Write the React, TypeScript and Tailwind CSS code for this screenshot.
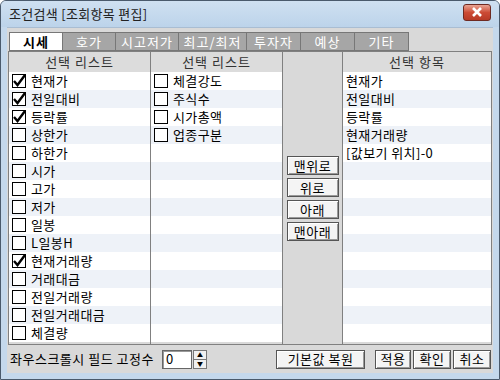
import React from 'react';

const FONT = { fontFamily: '"Noto Sans CJK KR", "Liberation Sans", sans-serif' };

const tabs = [
  { label: '시세', w: 'w-[54px]', active: true },
  { label: '호가', w: 'w-[54px]' },
  { label: '시고저가', w: 'w-[64px]' },
  { label: '최고/최저', w: 'w-[69px]' },
  { label: '투자자', w: 'w-[55px]' },
  { label: '예상', w: 'w-[55px]' },
  { label: '기타', w: 'w-[55px]' },
];

const list1: [string, boolean][] = [
  ['현재가', true],
  ['전일대비', true],
  ['등락률', true],
  ['상한가', false],
  ['하한가', false],
  ['시가', false],
  ['고가', false],
  ['저가', false],
  ['일봉', false],
  ['L일봉H', false],
  ['현재거래량', true],
  ['거래대금', false],
  ['전일거래량', false],
  ['전일거래대금', false],
  ['체결량', false],
];

const list2 = ['체결강도', '주식수', '시가총액', '업종구분'];
const picked = ['현재가', '전일대비', '등락률', '현재거래량', '[값보기 위치]-0'];

function CheckBox({ on }: { on: boolean }) {
  return (
    <span className="relative w-[14px] h-[14px] border border-black bg-white shrink-0">
      {on && (
        <svg className="absolute -left-[1px] -top-[2px]" width="16" height="15" viewBox="0 0 16 15">
          <path d="M2 8 L5.5 12 L13 2" fill="none" stroke="#000" strokeWidth="2.4" />
        </svg>
      )}
    </span>
  );
}

function Row({ i, children }: { i: number; children?: React.ReactNode }) {
  return (
    <div className={`h-[18px] flex items-center gap-[5px] pl-[3px] ${i % 2 ? 'bg-[#eef2f8]' : 'bg-white'}`}>
      {children}
    </div>
  );
}

function Header({ text }: { text: string }) {
  return (
    <div className="h-[20px] shrink-0 bg-[#dcdcdc] flex items-center justify-center text-[13px] text-[#333] tracking-[1px]">
      {text}
    </div>
  );
}

function Btn({ label, w }: { label: string; w: string }) {
  return (
    <div className={`${w} h-[19px] border border-[#555] bg-[#f4f4f4] shadow-[inset_1px_1px_0_#fff,inset_-1px_-1px_0_#999] flex items-center justify-center text-[13px] text-black tracking-[0.5px]`}>
      {label}
    </div>
  );
}

export default function App() {
  return (
    <div
      className="w-[500px] h-[380px] flex flex-col border border-[#4a5a6c] rounded-t-[6px] bg-[#c4d8ec] overflow-hidden"
      style={FONT}
    >
      <div className="h-[26px] shrink-0 flex items-center justify-between pl-[8px] pr-[8px] bg-gradient-to-b from-[#cfe0f1] to-[#bcd3ea]">
        <span className="text-[13px] text-[#222] tracking-[0.3px]">조건검색 [조회항목 편집]</span>
        <div className="w-[28px] h-[17px] -mt-[4px] rounded-[3px] border border-[#6e2a22] bg-gradient-to-b from-[#e8a393] via-[#cc4b35] to-[#b73a26] flex items-center justify-center">
          <svg width="12" height="10" viewBox="0 0 12 10">
            <path d="M2 1 L10 9 M10 1 L2 9" stroke="#fff" strokeWidth="2.6" />
          </svg>
        </div>
      </div>

      <div className="flex-1 mx-[6px] mb-[6px] bg-[#d9d9d9] border-t border-[#a9bdd2] flex flex-col px-[1px]">
        <div className="flex pt-[4px] pl-[1px] h-[23px] shrink-0">
          {tabs.map((t) => (
            <div
              key={t.label}
              className={`${t.w} h-[19px] flex items-center justify-center border border-[#777] -mr-[1px] text-[13px] tracking-[1px] ${
                t.active ? 'bg-white text-black font-bold' : 'bg-[#a6a6a6] text-white'
              }`}
            >
              {t.label}
            </div>
          ))}
        </div>

        <div className="h-[294px] flex border border-[#808080] bg-[#d9d9d9]">
          <div className="w-[142px] flex flex-col border-r border-[#808080] overflow-hidden">
            <Header text="선택 리스트" />
            {list1.map(([label, on], i) => (
              <Row key={label} i={i}>
                <CheckBox on={on} />
                <span className="text-[13px] text-black tracking-[0.4px]">{label}</span>
              </Row>
            ))}
          </div>
          <div className="w-[132px] flex flex-col border-r border-[#808080] overflow-hidden">
            <Header text="선택 리스트" />
            {Array.from({ length: 15 }).map((_, i) => (
              <Row key={i} i={i}>
                {list2[i] && (
                  <>
                    <CheckBox on={false} />
                    <span className="text-[13px] text-black tracking-[0.4px]">{list2[i]}</span>
                  </>
                )}
              </Row>
            ))}
          </div>
          <div className="w-[59px] flex flex-col items-center pt-[104px] gap-[3px]">
            <Btn label="맨위로" w="w-[52px]" />
            <Btn label="위로" w="w-[52px]" />
            <Btn label="아래" w="w-[52px]" />
            <Btn label="맨아래" w="w-[52px]" />
          </div>
          <div className="flex-1 flex flex-col border-l border-[#808080] overflow-hidden">
            <Header text="선택 항목" />
            {Array.from({ length: 15 }).map((_, i) => (
              <Row key={i} i={i}>
                {picked[i] && <span className="text-[13px] text-black tracking-[0.4px]">{picked[i]}</span>}
              </Row>
            ))}
          </div>
        </div>

        <div className="flex-1 flex items-center pl-[2px] pr-[1px]">
          <span className="text-[13px] text-black tracking-[0.5px]">좌우스크롤시 필드 고정수</span>
          <div className="ml-[8px] w-[30px] h-[19px] bg-white border border-[#666] shadow-[inset_1px_1px_0_#999] flex items-center pl-[3px] text-[13px]">
            0
          </div>
          <div className="w-[14px] h-[19px] flex flex-col ml-[1px]">
            <div className="flex-1 border border-[#777] bg-[#f0f0f0] flex items-center justify-center text-[6px] leading-none">▲</div>
            <div className="flex-1 border border-[#777] border-t-0 bg-[#f0f0f0] flex items-center justify-center text-[6px] leading-none">▼</div>
          </div>
          <div className="flex-1" />
          <Btn label="기본값 복원" w="w-[89px]" />
          <div className="w-[10px]" />
          <Btn label="적용" w="w-[36px]" />
          <div className="w-[2px]" />
          <Btn label="확인" w="w-[38px]" />
          <div className="w-[2px]" />
          <Btn label="취소" w="w-[38px]" />
        </div>
      </div>
    </div>
  );
}
